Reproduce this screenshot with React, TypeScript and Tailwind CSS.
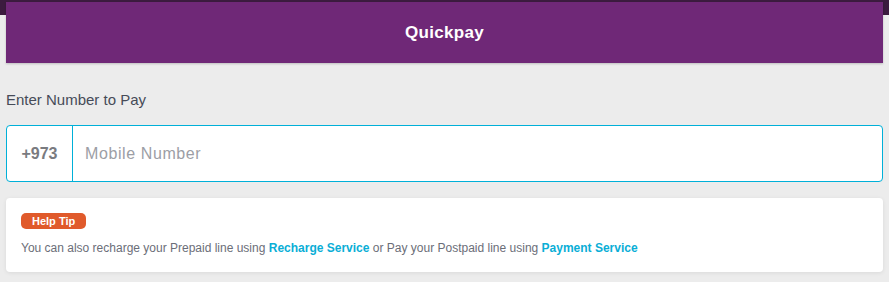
import React from 'react';

export default function App() {
  return (
    <div className="w-[889px] h-[282px] bg-[#ececec] font-['Liberation_Sans',Arial,sans-serif] overflow-hidden">
      {/* header */}
      <div className="bg-[linear-gradient(#3b1b3e_0_15px,#ececec_15px)] pt-[2px] px-[6px]">
        <div className="h-[61px] bg-[#6f2877] shadow-[0_1px_2px_rgba(0,0,0,0.2)] flex items-center justify-center">
          <h1 className="text-white font-bold text-[17px] tracking-[0.3px]">Quickpay</h1>
        </div>
      </div>

      <div className="px-[6px]">
        <div className="mt-[27px] text-[15px] leading-[20px] text-[#464b58]">Enter Number to Pay</div>

        {/* phone input */}
        <div className="mt-[15px] h-[57px] flex bg-white border border-[#00b0d8] rounded-[4px]">
          <div className="w-[66px] border-r border-[#00b0d8] flex items-center justify-center text-[16px] font-bold text-[#797b80]">
            +973
          </div>
          <input
            type="text"
            placeholder="Mobile Number"
            className="flex-1 bg-transparent outline-none px-[12px] text-[16px] tracking-[0.6px] placeholder:text-[#9c9ea5]"
          />
        </div>

        {/* help tip */}
        <div className="mt-[16px] h-[74px] bg-white rounded-[4px] shadow-[0_1px_4px_rgba(0,0,0,0.08)] px-[15px] pt-[15px]">
          <div className="flex w-fit items-center h-[16px] px-[11px] rounded-[5px] bg-[#e05a2b] text-white text-[11px] font-bold leading-none">
            Help Tip
          </div>
          <p className="mt-[10px] text-[12px] leading-[18px] text-[#6b6e78]">
            You can also recharge your Prepaid line using{' '}
            <a className="font-bold text-[#0aaed6]">Recharge Service</a> or Pay your Postpaid line using{' '}
            <a className="font-bold text-[#0aaed6]">Payment Service</a>
          </p>
        </div>
      </div>
    </div>
  );
}
